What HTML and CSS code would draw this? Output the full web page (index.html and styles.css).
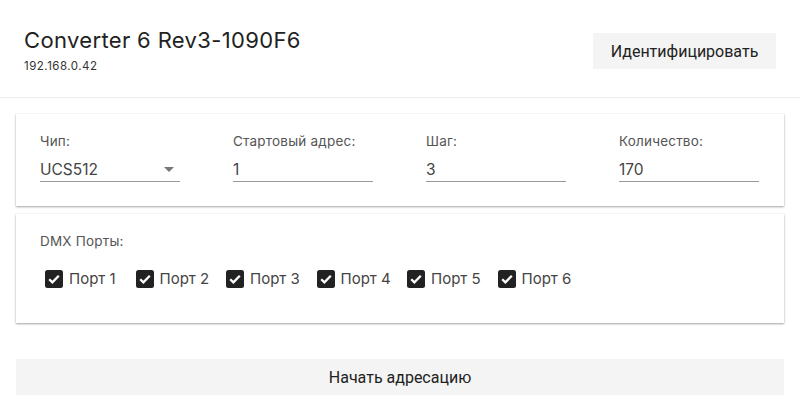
FILE: index.html
```html
<!DOCTYPE html>
<html lang="ru">
<head>
<meta charset="utf-8">
<link rel="stylesheet" href="styles.css">
</head>
<body>
<header class="top">
  <div class="device">
    <h1 class="title">Converter 6 Rev3-1090F6</h1>
    <div class="ip">192.168.0.42</div>
  </div>
  <button class="btn btn-identify">Идентифицировать</button>
</header>
<main class="content">
  <section class="card card-params">
    <div class="field">
      <label class="field-label">Чип:</label>
      <div class="field-input select">
        <span class="value">UCS512</span>
        <svg class="arrow" width="10" height="5" viewBox="0 0 10 5"><path d="M0 0h10L5 5z" fill="#777"/></svg>
      </div>
    </div>
    <div class="field">
      <label class="field-label">Стартовый адрес:</label>
      <div class="field-input"><span class="value">1</span></div>
    </div>
    <div class="field">
      <label class="field-label">Шаг:</label>
      <div class="field-input"><span class="value">3</span></div>
    </div>
    <div class="field">
      <label class="field-label">Количество:</label>
      <div class="field-input"><span class="value">170</span></div>
    </div>
  </section>
  <section class="card card-ports">
    <div class="field-label">DMX Порты:</div>
    <div class="ports">
      <label class="port"><span class="check"><svg width="12" height="10" viewBox="0 0 12 10"><path d="M1.2 5.2l3.2 3.2L10.8 1.8" fill="none" stroke="#fff" stroke-width="2.3"/></svg></span>Порт 1</label>
      <label class="port"><span class="check"><svg width="12" height="10" viewBox="0 0 12 10"><path d="M1.2 5.2l3.2 3.2L10.8 1.8" fill="none" stroke="#fff" stroke-width="2.3"/></svg></span>Порт 2</label>
      <label class="port"><span class="check"><svg width="12" height="10" viewBox="0 0 12 10"><path d="M1.2 5.2l3.2 3.2L10.8 1.8" fill="none" stroke="#fff" stroke-width="2.3"/></svg></span>Порт 3</label>
      <label class="port"><span class="check"><svg width="12" height="10" viewBox="0 0 12 10"><path d="M1.2 5.2l3.2 3.2L10.8 1.8" fill="none" stroke="#fff" stroke-width="2.3"/></svg></span>Порт 4</label>
      <label class="port"><span class="check"><svg width="12" height="10" viewBox="0 0 12 10"><path d="M1.2 5.2l3.2 3.2L10.8 1.8" fill="none" stroke="#fff" stroke-width="2.3"/></svg></span>Порт 5</label>
      <label class="port"><span class="check"><svg width="12" height="10" viewBox="0 0 12 10"><path d="M1.2 5.2l3.2 3.2L10.8 1.8" fill="none" stroke="#fff" stroke-width="2.3"/></svg></span>Порт 6</label>
    </div>
  </section>
  <button class="btn btn-start">Начать адресацию</button>
</main>
</body>
</html>
```

FILE: styles.css
```css
* { box-sizing: border-box; }
body {
  margin: 0;
  background: #fff;
  font-family: Inter, "Noto Sans", sans-serif;
  color: #333;
}
.top {
  display: flex;
  justify-content: space-between;
  align-items: flex-start;
  padding: 24px 24px 0 24px;
  height: 98px;
  border-bottom: 1px solid #ececec;
}
.device { padding-top: 2px; }
.title {
  margin: 0;
  font-weight: 400;
  font-size: 22px;
  letter-spacing: 0.35px;
  line-height: 28px;
  color: #222;
}
.ip {
  font-size: 11.5px;
  letter-spacing: 0.5px;
  line-height: 14px;
  margin-top: 5px;
  color: #333;
}
.btn {
  border: none;
  background: #f4f4f4;
  font-family: Roboto, sans-serif;
  font-size: 16px;
  color: #222;
  cursor: pointer;
}
.btn-identify {
  margin-top: 9px;
  width: 183px;
  height: 36px;
}
.content {
  padding: 16px;
  display: flex;
  flex-direction: column;
  gap: 8px;
}
.card {
  background: #fff;
  box-shadow: 0 1px 2px rgba(0,0,0,0.35), 0 0 2px rgba(0,0,0,0.06);
}
.card-params {
  display: grid;
  grid-template-columns: repeat(4, 140px);
  column-gap: 53px;
  padding: 19px 24px 0 24px;
  height: 92px;
}
.field-label {
  display: block;
  font-size: 13.5px;
  letter-spacing: 0.2px;
  line-height: 16px;
  color: #555;
}
.field-input {
  margin-top: 9px;
  height: 24px;
  border-bottom: 1px solid #999;
  display: flex;
  align-items: center;
  justify-content: space-between;
  font-size: 15.5px;
  color: #444;
}
.select .arrow { margin-right: 6px; }
.card-ports {
  padding: 19px 24px 0 24px;
  height: 109px;
}
.ports {
  display: flex;
  margin-top: 20px;
  padding-left: 5px;
}
.port {
  display: flex;
  align-items: center;
  width: 90.5px;
  font-size: 15px;
  color: #444;
}
.check {
  width: 18px;
  height: 18px;
  background: #222;
  border-radius: 2.5px;
  display: flex;
  align-items: center;
  justify-content: center;
  margin-right: 6px;
}
.btn-start {
  margin-top: 28px;
  height: 36px;
  width: 100%;
}
```
